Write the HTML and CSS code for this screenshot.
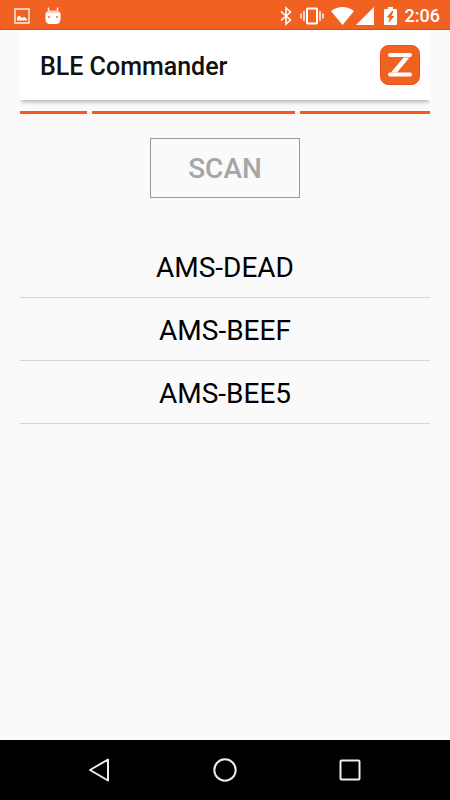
FILE: index.html
```html
<!DOCTYPE html>
<html lang="en">
<head>
    <meta charset="UTF-8">
    <meta name="viewport" content="width=device-width, initial-scale=1.0">
    <title>BLE Commander</title>
    <link rel="stylesheet" href="styles.css">
</head>
<body>

    <!-- Status bar -->
    <div class="status-bar">
        <div class="notifications">
            <svg width="16" height="16" viewBox="0 0 16 16">
                <rect x="1" y="1" width="14" height="14" fill="none" stroke="#fff" stroke-width="1.3"/>
                <path d="M3 12.500V9.500L5 7.500L8 10L10.500 9L13 11V12.500Z" fill="#fff"/>
            </svg>
            <svg width="16" height="18" viewBox="0 0 16 18">
                <path d="M4 4L3 0.5M12 4L13 0.5" stroke="#fff" stroke-width="1.2"/>
                <path d="M1 6Q1 3.5 4 3.5H12Q15 3.5 15 6Z" fill="#fbd0bc"/>
                <path d="M0.5 6H15.5V12Q15.5 17 11 17H5Q0.5 17 0.5 12Z" fill="#fff"/>
                <path d="M3 9h2v2H3zM11 9h2v2h-2z" fill="#f3916a"/>
            </svg>
        </div>
        <div class="indicators">
            <svg width="12" height="20" viewBox="0 0 12 20">
                <path d="M1 5.5L10.5 14L6 18V2L10.5 6L1 14.5" fill="none" stroke="#fff" stroke-width="1.6"/>
            </svg>
            <svg class="vibrate" width="24" height="18" viewBox="0 0 24 18">
                <rect x="7" y="1.5" width="10" height="15" rx="1" fill="none" stroke="#fff" stroke-width="2"/>
                <path d="M4 4V14M20 4V14M1 6.500V11.500M23 6.500V11.500" stroke="#fff" stroke-width="1.5"/>
            </svg>
            <svg class="wifi" width="23" height="18" viewBox="0 0 23 18">
                <path d="M0 4Q11.500 -4 23 4L11.500 18Z" fill="#fff"/>
            </svg>
            <svg class="signal" width="18" height="18" viewBox="0 0 18 18">
                <path d="M0 18L18 0V18Z" fill="#fff"/>
            </svg>
            <svg class="battery" width="13" height="18" viewBox="0 0 13 18">
                <path d="M4 0H9V2H12Q13 2 13 3V17Q13 18 12 18H1Q0 18 0 17V3Q0 2 1 2H4Z" fill="#fff"/>
                <path d="M8 4L2.500 10.500H5.500L4.500 16L10.500 9H7.500L9.500 4Z" fill="#f16122"/>
            </svg>
            <span class="clock">2:06</span>
        </div>
    </div>

    <main class="container">
        <header class="app-bar">
            <h1 class="title">BLE Commander</h1>
            <svg class="logo" width="40" height="40" viewBox="0 0 40 40">
                <rect x="0.5" y="0.5" width="39" height="39" rx="8" fill="#f16122" stroke="#e9501a"/>
                <path d="M10 10H30M10 29.500H30" stroke="#fff" stroke-width="4" stroke-linecap="round"/>
                <path d="M23.500 12.500H29.500L17 27.500H11Z" fill="#fff"/>
            </svg>
        </header>

        <div class="progress">
            <span class="segment short"></span>
            <span class="segment long"></span>
            <span class="segment medium"></span>
        </div>

        <button class="scan-btn" type="button" disabled>SCAN</button>

        <ul class="devices">
            <li class="device">AMS-DEAD</li>
            <li class="device">AMS-BEEF</li>
            <li class="device">AMS-BEE5</li>
        </ul>
    </main>

    <!-- Navigation bar -->
    <nav class="nav-bar">
        <button class="nav-btn" type="button" aria-label="Back">
            <svg width="26" height="26" viewBox="0 0 26 26">
                <path d="M21 2.500V23.500L3 13Z"/>
            </svg>
        </button>
        <button class="nav-btn" type="button" aria-label="Home">
            <svg width="26" height="26" viewBox="0 0 26 26">
                <circle cx="13" cy="13" r="10.700"/>
            </svg>
        </button>
        <button class="nav-btn" type="button" aria-label="Recent apps">
            <svg width="26" height="26" viewBox="0 0 26 26">
                <rect x="3.500" y="3.500" width="19" height="19" rx="1"/>
            </svg>
        </button>
    </nav>

</body>
</html>
```

FILE: styles.css
```css
* {
    box-sizing: border-box;
}

body {
    display: flex;
    flex-direction: column;
    min-height: 100vh;
    margin: 0;
    background: #fafafa;
    color: #000;
    font-family: Roboto, sans-serif;
}

.status-bar {
    display: flex;
    justify-content: space-between;
    align-items: center;
    height: 30px;
    padding: 2px 10px 0 14px;
    background: #f16122;
    border-bottom: 1px solid #e9440c;
    color: #fff;
}

.notifications,
.indicators {
    display: flex;
    align-items: center;
}

.notifications {
    gap: 15px;
}

.vibrate {
    margin-left: 8px;
}

.wifi {
    margin-left: 7px;
}

.signal {
    margin-left: 2px;
}

.battery {
    margin-left: 10px;
}

.clock {
    margin-left: 8px;
    font-size: 18px;
    font-weight: 500;
    line-height: 30px;
}

.container {
    flex: 1;
    display: flex;
    flex-direction: column;
    padding: 0 20px;
}

.app-bar {
    display: flex;
    justify-content: space-between;
    align-items: center;
    height: 70px;
    padding: 0 10px 0 20px;
    background: #fff;
    box-shadow: 0 2px 5px -1px rgba(0, 0, 0, 0.4);
    clip-path: inset(0 0 -10px 0);
}

.title {
    margin: 0;
    padding-top: 2px;
    color: #111;
    font-size: 25px;
    font-weight: 500;
}

.progress {
    display: flex;
    gap: 5px;
    margin-top: 11px;
}

.segment {
    height: 3px;
    background: #f9581b;
}

.short {
    flex: 67;
}

.long {
    flex: 203;
}

.medium {
    flex: 130;
}

.scan-btn {
    align-self: center;
    width: 150px;
    height: 60px;
    margin-top: 24px;
    padding: 0;
    background: #fafafa;
    border: 1px solid #999;
    color: #a6a6a6;
    font-family: inherit;
    font-size: 28px;
    font-weight: 500;
}

.devices {
    margin: 37px 0 0;
    padding: 0;
    list-style: none;
}

.device {
    height: 63px;
    border-bottom: 1px solid #d5d5d5;
    font-size: 28px;
    line-height: 65px;
    text-align: center;
}

.nav-bar {
    display: flex;
    justify-content: center;
    gap: 65px;
    height: 60px;
    background: #000;
}

.nav-btn {
    display: flex;
    align-items: center;
    justify-content: center;
    width: 60px;
    padding: 0;
    background: none;
    border: none;
}

.nav-btn svg {
    fill: none;
    stroke: #eee;
    stroke-width: 2;
    stroke-linejoin: round;
}
```
